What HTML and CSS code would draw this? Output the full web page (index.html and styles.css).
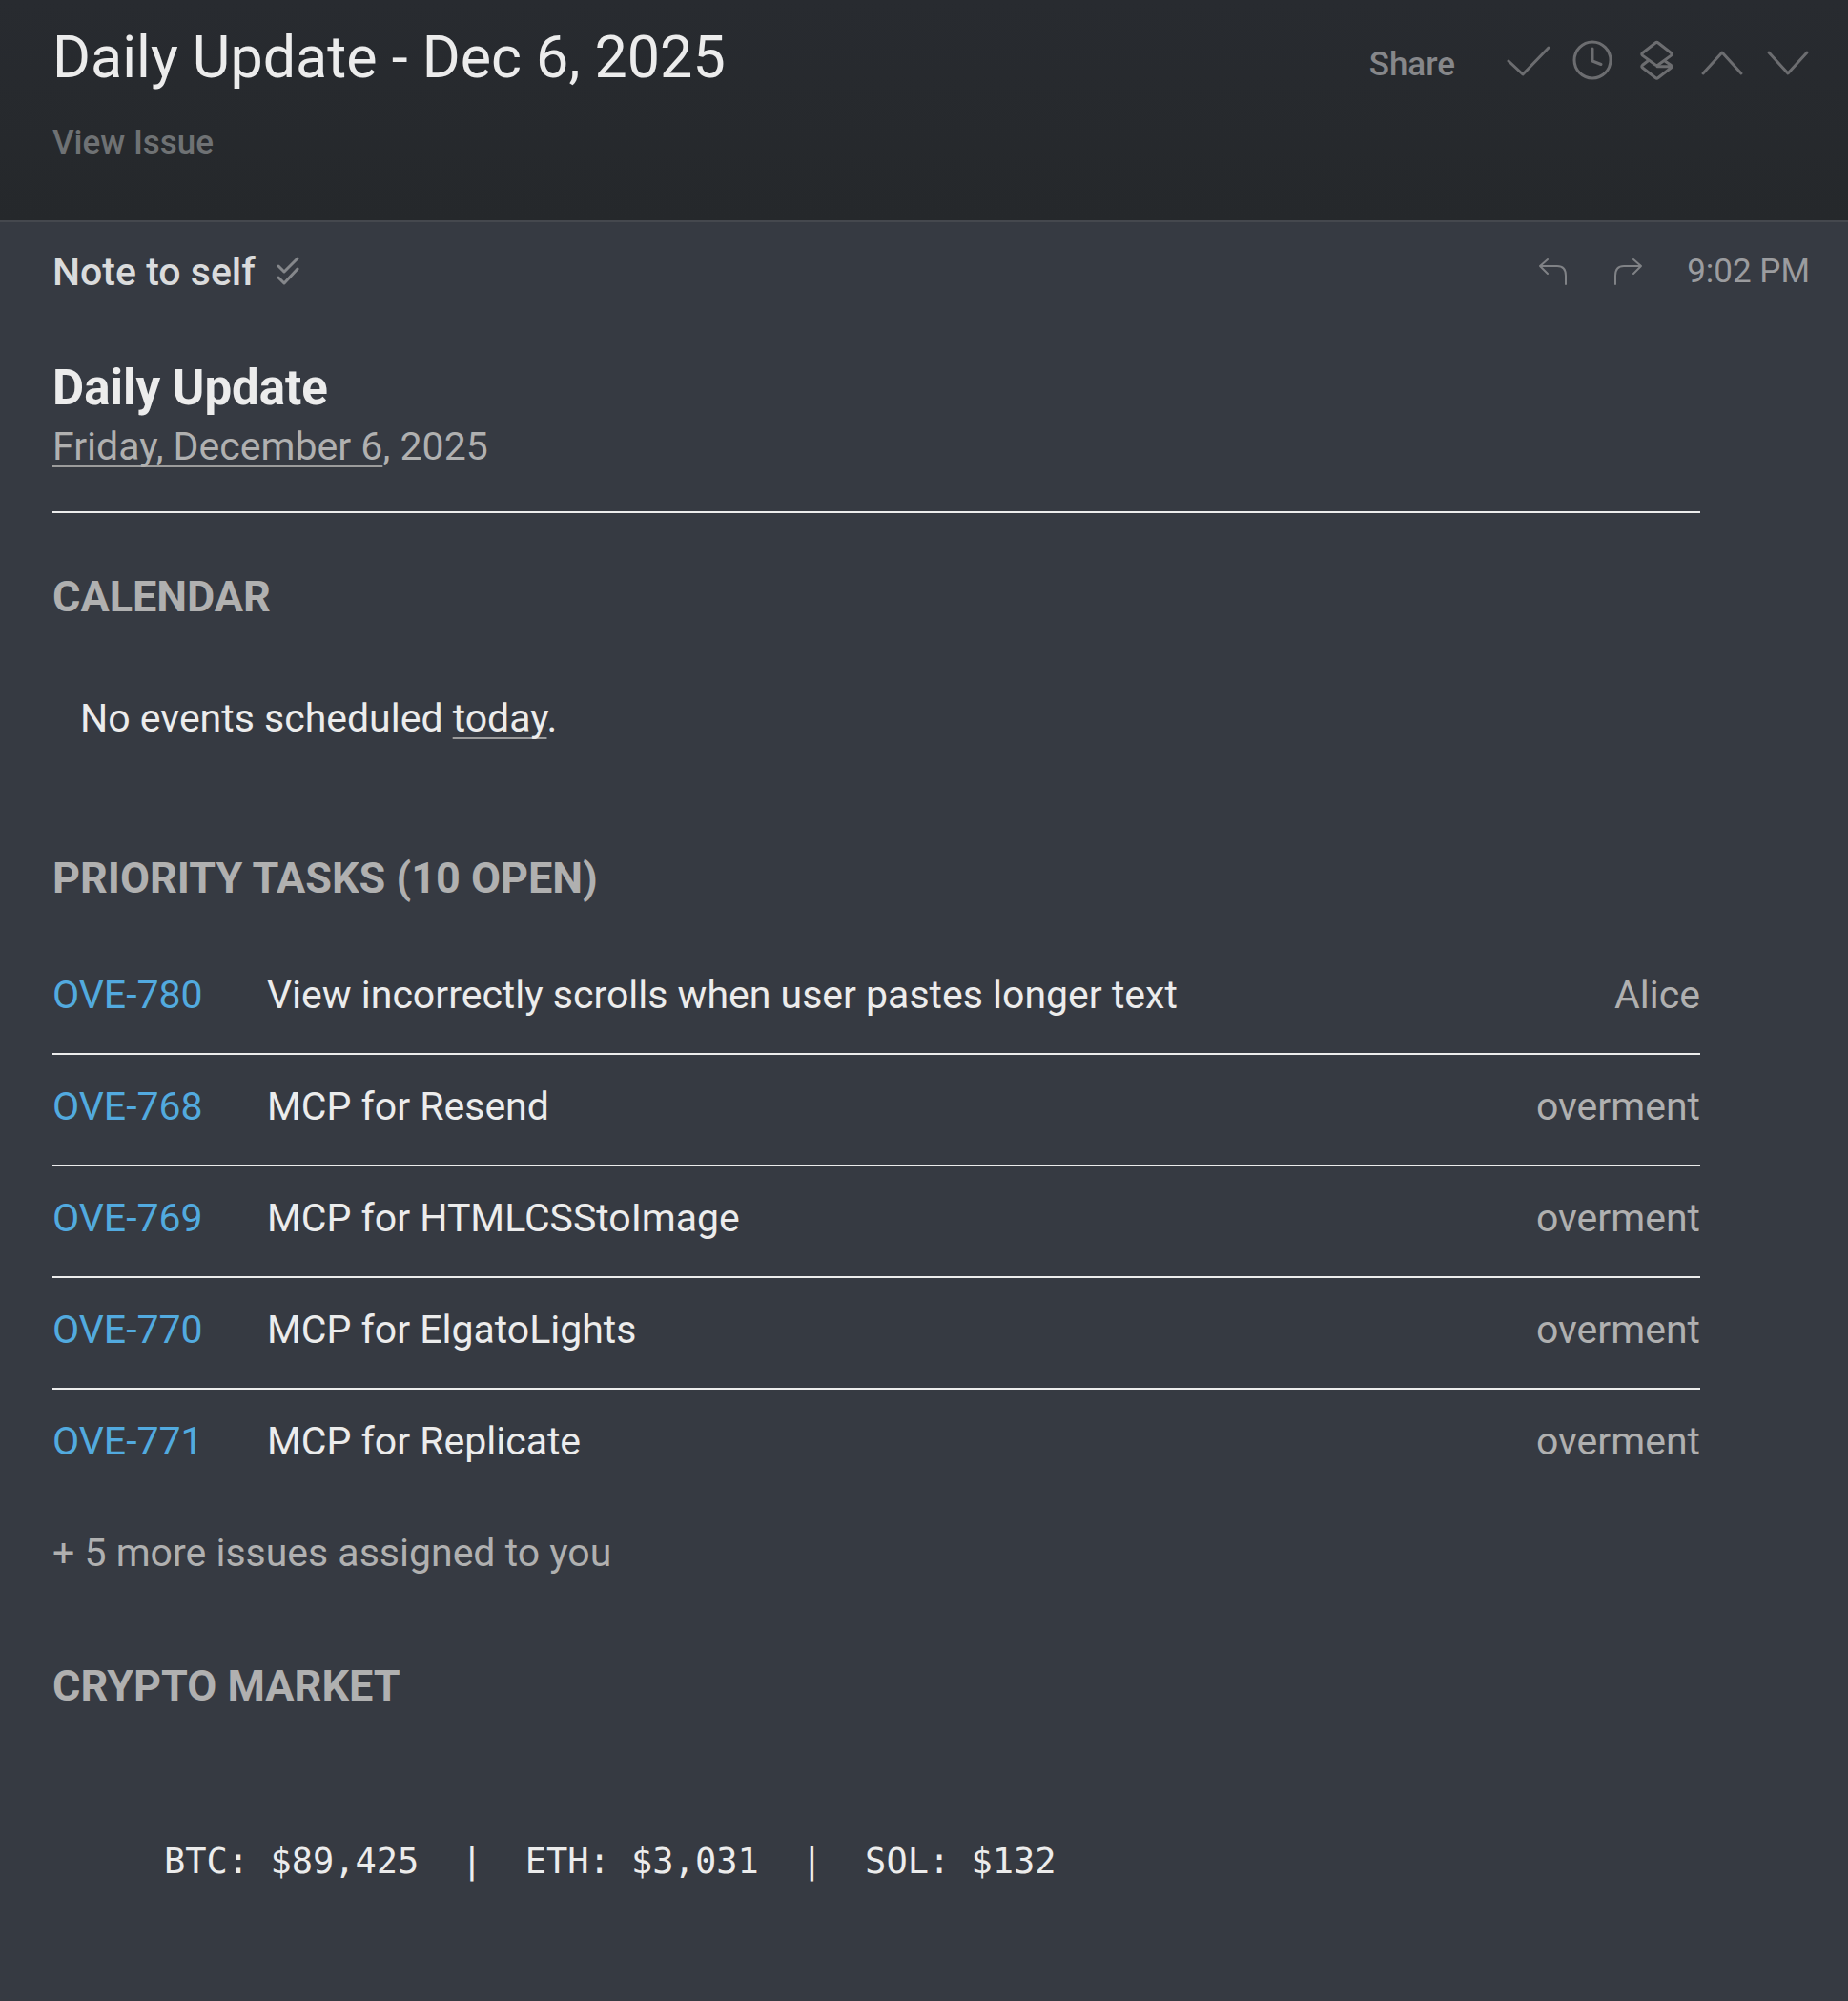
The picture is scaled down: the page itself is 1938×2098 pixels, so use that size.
FILE: index.html
```html
<!DOCTYPE html>
<html lang="en">
<head>
    <meta charset="UTF-8">
    <meta name="viewport" content="width=device-width, initial-scale=1.0">
    <title>Daily Update - Dec 6, 2025</title>
    <link rel="stylesheet" href="styles.css">
</head>
<body>
    <header class="thread-header">
        <div class="thread-info">
            <h1 class="thread-title">Daily Update - Dec 6, 2025</h1>
            <a class="view-issue" href="#">View Issue</a>
        </div>
        <div class="toolbar">
            <button class="share-button">Share</button>
            <button class="icon-button" aria-label="Mark done">
                <svg width="48" height="48" viewBox="0 0 48 48"><path d="M4 24L19 38L46 10"/></svg>
            </button>
            <button class="icon-button" aria-label="Remind me">
                <svg width="48" height="48" viewBox="0 0 48 48"><circle cx="24" cy="23" r="19"/><path d="M24 11V24L33 27.500"/></svg>
            </button>
            <button class="icon-button" aria-label="Split">
                <svg width="48" height="48" viewBox="0 0 48 48"><path d="M22 5Q23.500 3.800 25 5L38.500 15.500Q40 16.800 38.500 18.100L25 28Q23.500 29 22 28L8.500 18.100Q7 16.800 8.500 15.500Z"/><path d="M14 24L8.500 28.300Q7 29.700 8.500 31L22 41.500Q23.500 42.700 25 41.500L38.500 31Q40 29.700 38 29.700H24M32 24L38.500 28.500"/></svg>
            </button>
            <button class="icon-button" aria-label="Previous">
                <svg width="48" height="48" viewBox="0 0 48 48"><path d="M4 37L24 15L44 37"/></svg>
            </button>
            <button class="icon-button" aria-label="Next">
                <svg width="48" height="48" viewBox="0 0 48 48"><path d="M5 15L25 37L45 15"/></svg>
            </button>
        </div>
    </header>

    <main class="message">
        <div class="message-header">
            <div class="sender">
                <span>Note to self</span>
                <svg width="24" height="34" viewBox="0 0 24 34"><path d="M2 11L8 17L22 3M2 23L8 29L22 14"/></svg>
            </div>
            <div class="message-actions">
                <button class="reply-button" aria-label="Reply">
                    <svg width="32" height="32" viewBox="0 0 32 32"><path d="M10 3L2 10L10 18M2 10H20Q29 10 29 20V29"/></svg>
                </button>
                <button class="reply-button" aria-label="Forward">
                    <svg width="32" height="32" viewBox="0 0 32 32"><path d="M22 3L30 10L22 18M30 10H12Q3 10 3 20V29"/></svg>
                </button>
                <time class="message-time">9:02 PM</time>
            </div>
        </div>

        <article class="content">
            <h2 class="update-title">Daily Update</h2>
            <p class="update-date"><a class="date-link" href="#">Friday, December 6</a>, 2025</p>

            <h3 class="section-title">CALENDAR</h3>
            <p class="no-events">No events scheduled <a class="date-link" href="#">today</a>.</p>

            <h3 class="section-title">PRIORITY TASKS (10 OPEN)</h3>
            <table class="tasks">
                <tr>
                    <td class="task-id"><a href="#">OVE-780</a></td>
                    <td>View incorrectly scrolls when user pastes longer text</td>
                    <td class="task-owner">Alice</td>
                </tr>
                <tr>
                    <td class="task-id"><a href="#">OVE-768</a></td>
                    <td>MCP for Resend</td>
                    <td class="task-owner">overment</td>
                </tr>
                <tr>
                    <td class="task-id"><a href="#">OVE-769</a></td>
                    <td>MCP for HTMLCSStoImage</td>
                    <td class="task-owner">overment</td>
                </tr>
                <tr>
                    <td class="task-id"><a href="#">OVE-770</a></td>
                    <td>MCP for ElgatoLights</td>
                    <td class="task-owner">overment</td>
                </tr>
                <tr>
                    <td class="task-id"><a href="#">OVE-771</a></td>
                    <td>MCP for Replicate</td>
                    <td class="task-owner">overment</td>
                </tr>
            </table>
            <p class="more-issues">+ 5 more issues assigned to you</p>

            <h3 class="section-title">CRYPTO MARKET</h3>
            <pre class="prices">BTC: $89,425  |  ETH: $3,031  |  SOL: $132</pre>
        </article>
    </main>
</body>
</html>
```
FILE: styles.css
```css
* {
    box-sizing: border-box;
}

body {
    margin: 0;
    min-height: 100vh;
    background: #363a42;
    color: #ececec;
    font-family: Roboto, "Liberation Sans", sans-serif;
    font-size: 41px;
    line-height: 56px;
}

h1, h2, h3, p, pre {
    margin: 0;
}

a {
    color: inherit;
    text-decoration: none;
}

button {
    padding: 0;
    border: none;
    background: none;
    color: inherit;
    font-family: inherit;
    cursor: pointer;
}

svg {
    display: block;
    fill: none;
    stroke: currentColor;
    stroke-width: 2;
    stroke-linecap: round;
    stroke-linejoin: round;
}

.thread-header {
    display: flex;
    justify-content: space-between;
    align-items: flex-start;
    padding: 24px 40px 57px 55px;
    background: linear-gradient(#282b30, #25282b);
}

.thread-title {
    font-size: 61px;
    font-weight: 400;
    line-height: 72px;
}

.view-issue {
    display: block;
    margin-top: 30px;
    color: #6f7274;
    font-size: 35px;
    font-weight: 500;
    line-height: 48px;
}

.toolbar {
    display: flex;
    align-items: flex-start;
    gap: 20px;
    padding-top: 16px;
    color: #6c6d70;
}

.share-button {
    margin-right: 32px;
    padding-top: 4px;
    color: #86878a;
    font-size: 35px;
    font-weight: 500;
    line-height: 48px;
}

.icon-button svg {
    stroke-width: 3;
}

.message {
    border-top: 2px solid #45484e;
}

.message-header {
    display: flex;
    justify-content: space-between;
    align-items: center;
    padding: 24px 40px 0 55px;
}

.sender {
    display: flex;
    align-items: center;
    gap: 22px;
    color: #dadbdc;
    font-weight: 500;
}

.sender svg {
    color: #85878b;
    stroke-width: 3;
}

.message-actions {
    display: flex;
    align-items: center;
    gap: 46px;
    color: #808286;
}

.message-time {
    color: #9b9c9f;
    font-size: 35px;
}

.content {
    padding: 61px 155px 80px 55px;
}

.update-title {
    font-size: 51px;
    font-weight: 700;
    line-height: 66px;
}

.update-date {
    padding-bottom: 40px;
    border-bottom: 2px solid #ececec;
    color: #b0b0b0;
}

.date-link {
    text-decoration: underline 2px #9c9c9c;
    text-decoration-skip-ink: none;
    text-underline-offset: 6px;
}

.section-title {
    margin-top: 56px;
    color: #b0b0b0;
    font-size: 45px;
    font-weight: 700;
    line-height: 64px;
}

.no-events {
    padding: 67px 29px 52px;
}

.tasks {
    width: 100%;
    margin-top: 36px;
    border-collapse: collapse;
}

.tasks td {
    padding: 26px 0 33px;
    border-bottom: 2px solid #ececec;
}

.tasks tr:last-child td {
    border-bottom: none;
}

.tasks .task-id {
    width: 225px;
    color: #52aadf;
}

.tasks .task-owner {
    color: #b0b0b0;
    text-align: right;
}

.more-issues {
    margin: 28px 0 80px;
    color: #b0b0b0;
}

.prices {
    padding: 124px 117px 0;
    font-family: "DejaVu Sans Mono", monospace;
    font-size: 37px;
}
```
